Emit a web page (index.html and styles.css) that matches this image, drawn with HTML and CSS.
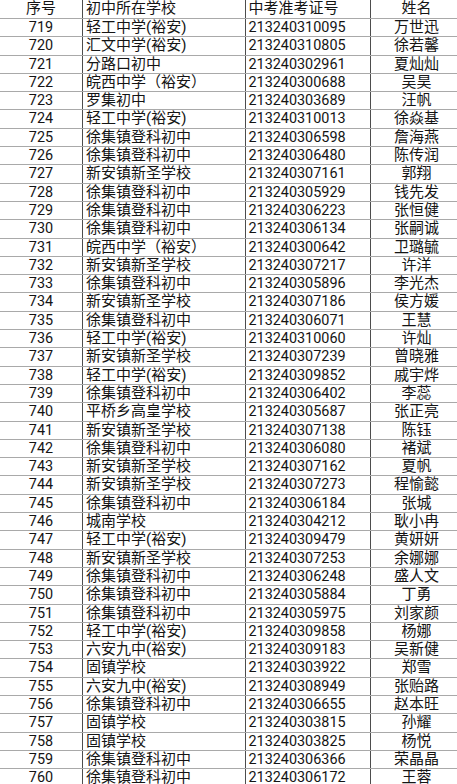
FILE: index.html
```html
<!DOCTYPE html>
<html lang="zh-CN">
<head>
<meta charset="utf-8">
<title>名单</title>
<link rel="stylesheet" href="styles.css">
</head>
<body>
<div class="sheet">
  <div class="row head"><div class="c seq">序号</div><div class="c school">初中所在学校</div><div class="c num">中考准考证号</div><div class="c name">姓名</div></div>
  <div class="row"><div class="c seq">719</div><div class="c school">轻工中学(裕安)</div><div class="c num">213240310095</div><div class="c name">万世迅</div></div>
  <div class="row"><div class="c seq">720</div><div class="c school">汇文中学(裕安)</div><div class="c num">213240310805</div><div class="c name">徐若馨</div></div>
  <div class="row"><div class="c seq">721</div><div class="c school">分路口初中</div><div class="c num">213240302961</div><div class="c name">夏灿灿</div></div>
  <div class="row"><div class="c seq">722</div><div class="c school">皖西中学（裕安）</div><div class="c num">213240300688</div><div class="c name">吴昊</div></div>
  <div class="row"><div class="c seq">723</div><div class="c school">罗集初中</div><div class="c num">213240303689</div><div class="c name">汪帆</div></div>
  <div class="row"><div class="c seq">724</div><div class="c school">轻工中学(裕安)</div><div class="c num">213240310013</div><div class="c name">徐焱基</div></div>
  <div class="row"><div class="c seq">725</div><div class="c school">徐集镇登科初中</div><div class="c num">213240306598</div><div class="c name">詹海燕</div></div>
  <div class="row"><div class="c seq">726</div><div class="c school">徐集镇登科初中</div><div class="c num">213240306480</div><div class="c name">陈传润</div></div>
  <div class="row"><div class="c seq">727</div><div class="c school">新安镇新圣学校</div><div class="c num">213240307161</div><div class="c name">郭翔</div></div>
  <div class="row"><div class="c seq">728</div><div class="c school">徐集镇登科初中</div><div class="c num">213240305929</div><div class="c name">钱先发</div></div>
  <div class="row"><div class="c seq">729</div><div class="c school">徐集镇登科初中</div><div class="c num">213240306223</div><div class="c name">张恒健</div></div>
  <div class="row"><div class="c seq">730</div><div class="c school">徐集镇登科初中</div><div class="c num">213240306134</div><div class="c name">张嗣诚</div></div>
  <div class="row"><div class="c seq">731</div><div class="c school">皖西中学（裕安）</div><div class="c num">213240300642</div><div class="c name">卫璐毓</div></div>
  <div class="row"><div class="c seq">732</div><div class="c school">新安镇新圣学校</div><div class="c num">213240307217</div><div class="c name">许洋</div></div>
  <div class="row"><div class="c seq">733</div><div class="c school">徐集镇登科初中</div><div class="c num">213240305896</div><div class="c name">李光杰</div></div>
  <div class="row"><div class="c seq">734</div><div class="c school">新安镇新圣学校</div><div class="c num">213240307186</div><div class="c name">侯方媛</div></div>
  <div class="row"><div class="c seq">735</div><div class="c school">徐集镇登科初中</div><div class="c num">213240306071</div><div class="c name">王慧</div></div>
  <div class="row"><div class="c seq">736</div><div class="c school">轻工中学(裕安)</div><div class="c num">213240310060</div><div class="c name">许灿</div></div>
  <div class="row"><div class="c seq">737</div><div class="c school">新安镇新圣学校</div><div class="c num">213240307239</div><div class="c name">曾晓雅</div></div>
  <div class="row"><div class="c seq">738</div><div class="c school">轻工中学(裕安)</div><div class="c num">213240309852</div><div class="c name">戚宇烨</div></div>
  <div class="row"><div class="c seq">739</div><div class="c school">徐集镇登科初中</div><div class="c num">213240306402</div><div class="c name">李蕊</div></div>
  <div class="row"><div class="c seq">740</div><div class="c school">平桥乡高皇学校</div><div class="c num">213240305687</div><div class="c name">张正亮</div></div>
  <div class="row"><div class="c seq">741</div><div class="c school">新安镇新圣学校</div><div class="c num">213240307138</div><div class="c name">陈钰</div></div>
  <div class="row"><div class="c seq">742</div><div class="c school">徐集镇登科初中</div><div class="c num">213240306080</div><div class="c name">褚斌</div></div>
  <div class="row"><div class="c seq">743</div><div class="c school">新安镇新圣学校</div><div class="c num">213240307162</div><div class="c name">夏帆</div></div>
  <div class="row"><div class="c seq">744</div><div class="c school">新安镇新圣学校</div><div class="c num">213240307273</div><div class="c name">程愉懿</div></div>
  <div class="row"><div class="c seq">745</div><div class="c school">徐集镇登科初中</div><div class="c num">213240306184</div><div class="c name">张城</div></div>
  <div class="row"><div class="c seq">746</div><div class="c school">城南学校</div><div class="c num">213240304212</div><div class="c name">耿小冉</div></div>
  <div class="row"><div class="c seq">747</div><div class="c school">轻工中学(裕安)</div><div class="c num">213240309479</div><div class="c name">黄妍妍</div></div>
  <div class="row"><div class="c seq">748</div><div class="c school">新安镇新圣学校</div><div class="c num">213240307253</div><div class="c name">余娜娜</div></div>
  <div class="row"><div class="c seq">749</div><div class="c school">徐集镇登科初中</div><div class="c num">213240306248</div><div class="c name">盛人文</div></div>
  <div class="row"><div class="c seq">750</div><div class="c school">徐集镇登科初中</div><div class="c num">213240305884</div><div class="c name">丁勇</div></div>
  <div class="row"><div class="c seq">751</div><div class="c school">徐集镇登科初中</div><div class="c num">213240305975</div><div class="c name">刘家颜</div></div>
  <div class="row"><div class="c seq">752</div><div class="c school">轻工中学(裕安)</div><div class="c num">213240309858</div><div class="c name">杨娜</div></div>
  <div class="row"><div class="c seq">753</div><div class="c school">六安九中(裕安)</div><div class="c num">213240309183</div><div class="c name">吴新健</div></div>
  <div class="row"><div class="c seq">754</div><div class="c school">固镇学校</div><div class="c num">213240303922</div><div class="c name">郑雪</div></div>
  <div class="row"><div class="c seq">755</div><div class="c school">六安九中(裕安)</div><div class="c num">213240308949</div><div class="c name">张贻路</div></div>
  <div class="row"><div class="c seq">756</div><div class="c school">徐集镇登科初中</div><div class="c num">213240306655</div><div class="c name">赵本旺</div></div>
  <div class="row"><div class="c seq">757</div><div class="c school">固镇学校</div><div class="c num">213240303815</div><div class="c name">孙耀</div></div>
  <div class="row"><div class="c seq">758</div><div class="c school">固镇学校</div><div class="c num">213240303825</div><div class="c name">杨悦</div></div>
  <div class="row"><div class="c seq">759</div><div class="c school">徐集镇登科初中</div><div class="c num">213240306366</div><div class="c name">荣晶晶</div></div>
  <div class="row"><div class="c seq">760</div><div class="c school">徐集镇登科初中</div><div class="c num">213240306172</div><div class="c name">王蓉</div></div>
</div>
</body>
</html>
```

FILE: styles.css
```css
html, body {
  margin: 0;
  padding: 0;
  background: #ffffff;
  overflow: hidden;
}

.sheet {
  width: 457px;
  font-family: Roboto, "Noto Sans CJK SC", sans-serif;
  font-size: 15px;
  color: #141414;
}

.row {
  display: grid;
  grid-template-columns: 83px 163px 125px 86px;
  height: 18.3px;
  box-sizing: border-box;
  border-top: 1px solid #a9a9a9;
}

.row.head {
  height: 18px;
  border-top: none;
}

.c {
  box-sizing: border-box;
  line-height: 17px;
  white-space: nowrap;
  overflow: visible;
}

.seq,
.school,
.num {
  border-right: 1px solid #4d4d4d;
}

.seq {
  text-align: center;
  font-size: 14.4px;
}

.school {
  padding-left: 3px;
}

.num {
  padding-left: 2.5px;
  font-size: 14.4px;
}

.head .num,
.head .seq {
  font-size: 15px;
}

.name {
  text-align: center;
  padding-left: 5px;
}
```
